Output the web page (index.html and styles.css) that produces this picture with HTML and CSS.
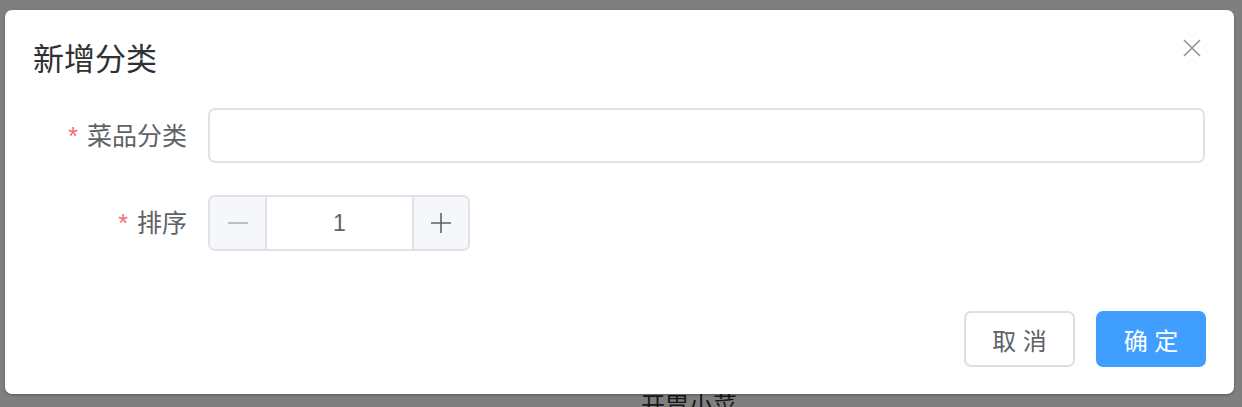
FILE: index.html
```html
<!DOCTYPE html>
<html lang="zh-CN">
<head>
<meta charset="utf-8">
<title>新增分类</title>
<link rel="stylesheet" href="styles.css">
</head>
<body>
<div class="page">
  <div class="page-row">开胃小菜</div>
</div>
<div class="mask">
  <div class="dialog">
    <div class="dialog-header">
      <span class="dialog-title">新增分类</span>
      <button class="dialog-close" aria-label="关闭">
        <svg width="18" height="18" viewBox="0 0 18 18"><path d="M1 1L17 17M17 1L1 17" stroke="#909399" stroke-width="1.6" fill="none"/></svg>
      </button>
    </div>
    <div class="dialog-body">
      <div class="form-row">
        <label class="form-label"><span class="req">*</span>菜品分类</label>
        <div class="form-control"><input class="text-input" type="text"></div>
      </div>
      <div class="form-row">
        <label class="form-label"><span class="req">*</span>排序</label>
        <div class="form-control">
          <div class="num-input">
            <span class="num-btn num-minus"><svg width="20" height="20" viewBox="0 0 20 20"><path d="M0 10H20" stroke="#a8abb2" stroke-width="1.6"/></svg></span>
            <span class="num-value">1</span>
            <span class="num-btn num-plus"><svg width="20" height="20" viewBox="0 0 20 20"><path d="M0 10H20M10 0V20" stroke="#606266" stroke-width="1.6"/></svg></span>
          </div>
        </div>
      </div>
    </div>
    <div class="dialog-footer">
      <button class="btn btn-default">取 消</button>
      <button class="btn btn-primary">确 定</button>
    </div>
  </div>
</div>
</body>
</html>
```
FILE: styles.css
```css
html, body {
  margin: 0;
  padding: 0;
  width: 1242px;
  height: 407px;
  overflow: hidden;
  font-family: "Liberation Sans", "Noto Sans CJK SC", sans-serif;
}
body {
  position: relative;
  background: #ffffff;
}
.page {
  padding: 391px 0 0 641px;
}
.page-row {
  font-size: 24px;
  line-height: 30px;
  color: #333333;
}
.mask {
  position: absolute;
  inset: 0;
  background: rgba(0, 0, 0, 0.5);
}
.dialog {
  position: absolute;
  left: 5px;
  top: 10px;
  width: 1229px;
  height: 384px;
  box-sizing: border-box;
  background: #ffffff;
  border-radius: 7px;
  box-shadow: 0 1px 3px rgba(0, 0, 0, 0.3);
  display: flex;
  flex-direction: column;
}
.dialog-header {
  display: flex;
  justify-content: space-between;
  align-items: flex-start;
  padding: 29px 33px 0 28px;
}
.dialog-title {
  font-size: 31px;
  line-height: 42px;
  color: #303133;
}
.dialog-close {
  border: 0;
  background: none;
  padding: 0;
  margin-top: 0;
  width: 18px;
  height: 18px;
  display: flex;
}
.dialog-body {
  padding: 27px 29px 0 28px;
  display: flex;
  flex-direction: column;
  gap: 32px;
}
.form-row {
  display: flex;
  align-items: center;
}
.form-label {
  width: 175px;
  box-sizing: border-box;
  padding-right: 21px;
  text-align: right;
  font-size: 25px;
  color: #606266;
  line-height: 30px;
}
.req {
  color: #f56c6c;
  margin-right: 9px;
  font-size: 25px;
}
.form-control {
  flex: 1;
}
.text-input {
  display: block;
  width: 100%;
  height: 55px;
  box-sizing: border-box;
  border: 2px solid #dfe2e8;
  border-radius: 7px;
  outline: none;
  background: #fff;
  font-size: 22px;
  padding: 0 20px;
}
.num-input {
  display: flex;
  width: 262px;
  height: 56px;
  box-sizing: border-box;
  border: 2px solid #dfe2e8;
  border-radius: 7px;
  overflow: hidden;
}
.num-btn {
  background: #f5f7fa;
  display: flex;
  align-items: center;
  justify-content: center;
}
.num-minus {
  width: 55px;
  border-right: 2px solid #dfe2e8;
}
.num-plus {
  width: 54px;
  border-left: 2px solid #dfe2e8;
}
.num-value {
  flex: 1;
  display: flex;
  align-items: center;
  justify-content: center;
  font-size: 23px;
  color: #606266;
}
.dialog-footer {
  margin-top: auto;
  display: flex;
  justify-content: flex-end;
  gap: 21px;
  padding: 0 28px 27px 0;
}
.btn {
  height: 56px;
  box-sizing: border-box;
  border-radius: 7px;
  font-family: "Liberation Sans", "Noto Sans CJK SC", sans-serif;
  font-size: 24px;
  padding: 0;
  cursor: pointer;
}
.btn-default {
  width: 111px;
  background: #ffffff;
  border: 2px solid #dcdfe6;
  color: #606266;
}
.btn-primary {
  width: 110px;
  background: #409eff;
  border: 2px solid #409eff;
  color: #ffffff;
}
```
